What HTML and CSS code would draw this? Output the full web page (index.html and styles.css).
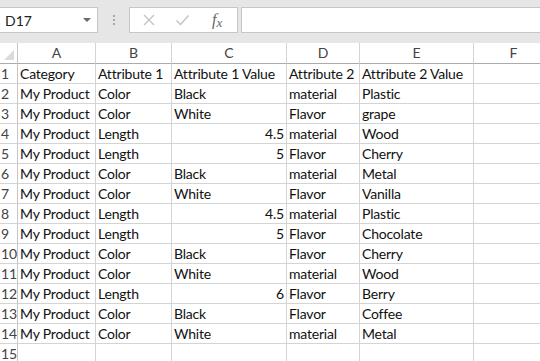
FILE: index.html
```html
<!DOCTYPE html>
<html lang="en">
<head>
    <meta charset="UTF-8">
    <title>Sheet1</title>
    <link rel="stylesheet" href="styles.css">
</head>
<body>
    <div class="formula-bar">
        <div class="name-box">
            <span>D17</span>
            <span class="name-arrow"></span>
        </div>
        <div class="grip">
            <span></span><span></span><span></span>
        </div>
        <div class="fx-buttons">
            <svg class="fx-icon" width="14" height="14" viewBox="0 0 14 14">
                <path d="M2 2 L12 12 M12 2 L2 12" stroke="#c4c4c4" stroke-width="1.4" fill="none"/>
            </svg>
            <svg class="fx-icon" width="15" height="14" viewBox="0 0 15 14">
                <path d="M1.5 7.5 L5.5 11.5 L13.5 2.5" stroke="#c4c4c4" stroke-width="1.5" fill="none"/>
            </svg>
            <span class="fx-label"><i>f</i><span class="fx-x">x</span></span>
        </div>
        <div class="formula-input"></div>
    </div>

    <div class="sheet">
        <div class="corner"><span class="corner-tri"></span></div>
        <div class="col-head">A</div>
        <div class="col-head">B</div>
        <div class="col-head">C</div>
        <div class="col-head">D</div>
        <div class="col-head">E</div>
        <div class="col-head">F</div>

        <div class="row-head">1</div>
        <div class="cell">Category</div>
        <div class="cell">Attribute 1</div>
        <div class="cell">Attribute 1 Value</div>
        <div class="cell">Attribute 2</div>
        <div class="cell">Attribute 2 Value</div>
        <div class="cell"></div>

        <div class="row-head">2</div>
        <div class="cell">My Product</div>
        <div class="cell">Color</div>
        <div class="cell">Black</div>
        <div class="cell">material</div>
        <div class="cell">Plastic</div>
        <div class="cell"></div>

        <div class="row-head">3</div>
        <div class="cell">My Product</div>
        <div class="cell">Color</div>
        <div class="cell">White</div>
        <div class="cell">Flavor</div>
        <div class="cell">grape</div>
        <div class="cell"></div>

        <div class="row-head">4</div>
        <div class="cell">My Product</div>
        <div class="cell">Length</div>
        <div class="cell num">4.5</div>
        <div class="cell">material</div>
        <div class="cell">Wood</div>
        <div class="cell"></div>

        <div class="row-head">5</div>
        <div class="cell">My Product</div>
        <div class="cell">Length</div>
        <div class="cell num">5</div>
        <div class="cell">Flavor</div>
        <div class="cell">Cherry</div>
        <div class="cell"></div>

        <div class="row-head">6</div>
        <div class="cell">My Product</div>
        <div class="cell">Color</div>
        <div class="cell">Black</div>
        <div class="cell">material</div>
        <div class="cell">Metal</div>
        <div class="cell"></div>

        <div class="row-head">7</div>
        <div class="cell">My Product</div>
        <div class="cell">Color</div>
        <div class="cell">White</div>
        <div class="cell">Flavor</div>
        <div class="cell">Vanilla</div>
        <div class="cell"></div>

        <div class="row-head">8</div>
        <div class="cell">My Product</div>
        <div class="cell">Length</div>
        <div class="cell num">4.5</div>
        <div class="cell">material</div>
        <div class="cell">Plastic</div>
        <div class="cell"></div>

        <div class="row-head">9</div>
        <div class="cell">My Product</div>
        <div class="cell">Length</div>
        <div class="cell num">5</div>
        <div class="cell">Flavor</div>
        <div class="cell">Chocolate</div>
        <div class="cell"></div>

        <div class="row-head">10</div>
        <div class="cell">My Product</div>
        <div class="cell">Color</div>
        <div class="cell">Black</div>
        <div class="cell">Flavor</div>
        <div class="cell">Cherry</div>
        <div class="cell"></div>

        <div class="row-head">11</div>
        <div class="cell">My Product</div>
        <div class="cell">Color</div>
        <div class="cell">White</div>
        <div class="cell">material</div>
        <div class="cell">Wood</div>
        <div class="cell"></div>

        <div class="row-head">12</div>
        <div class="cell">My Product</div>
        <div class="cell">Length</div>
        <div class="cell num">6</div>
        <div class="cell">Flavor</div>
        <div class="cell">Berry</div>
        <div class="cell"></div>

        <div class="row-head">13</div>
        <div class="cell">My Product</div>
        <div class="cell">Color</div>
        <div class="cell">Black</div>
        <div class="cell">Flavor</div>
        <div class="cell">Coffee</div>
        <div class="cell"></div>

        <div class="row-head">14</div>
        <div class="cell">My Product</div>
        <div class="cell">Color</div>
        <div class="cell">White</div>
        <div class="cell">material</div>
        <div class="cell">Metal</div>
        <div class="cell"></div>

        <div class="row-head">15</div>
        <div class="cell"></div>
        <div class="cell"></div>
        <div class="cell"></div>
        <div class="cell"></div>
        <div class="cell"></div>
        <div class="cell"></div>
    </div>
</body>
</html>
```

FILE: styles.css
```css
/* Grund */
body {
    margin: 0;
    width: 540px;
    height: 361px;
    overflow: hidden;
    background: #ffffff;
    font-family: Lato, "Liberation Sans", sans-serif;
    color: #000;
}

/* Formelfält */
.formula-bar {
    display: flex;
    align-items: stretch;
    height: 43px;
    padding-top: 7px;
    box-sizing: border-box;
    background: #e6e6e6;
}

.name-box {
    width: 99px;
    height: 26px;
    box-sizing: border-box;
    margin-left: -1px;
    background: #fff;
    border: 1px solid #c6c6c6;
    display: flex;
    align-items: center;
    justify-content: space-between;
    padding: 0 6px 0 5px;
    font-size: 14px;
    color: #222;
}

.name-arrow {
    width: 0;
    height: 0;
    border-left: 4px solid transparent;
    border-right: 4px solid transparent;
    border-top: 4px solid #6a6a6a;
}

.grip {
    width: 31px;
    height: 26px;
    display: flex;
    flex-direction: column;
    align-items: center;
    justify-content: center;
    gap: 2px;
}

.grip span {
    width: 2px;
    height: 2px;
    background: #a8a8a8;
}

.fx-buttons {
    width: 109px;
    height: 26px;
    box-sizing: border-box;
    background: #fff;
    border: 1px solid #c6c6c6;
    display: flex;
    align-items: center;
    padding-left: 12px;
    gap: 19px;
}

.fx-label {
    font-family: "Liberation Serif", serif;
    font-size: 16px;
    font-style: italic;
    color: #666;
    margin-left: 3px;
}

.fx-x {
    font-size: 13px;
    position: relative;
    top: 2px;
}

.formula-input {
    flex: 1;
    height: 26px;
    box-sizing: border-box;
    margin-left: 3px;
    margin-right: -2px;
    background: #fff;
    border: 1px solid #c6c6c6;
}

/* Kalkylblad */
.sheet {
    display: grid;
    grid-template-columns: 18px 78px 76px 115px 73px 114px 80px;
    grid-template-rows: 21px;
    grid-auto-rows: 20px;
}

.sheet > div {
    box-sizing: border-box;
    border-right: 1px solid #d4d4d4;
    border-bottom: 1px solid #d4d4d4;
    white-space: nowrap;
    overflow: hidden;
}

.corner {
    position: relative;
    background: #fff;
    border-right-color: #c6c6c6 !important;
    border-bottom-color: #ababab !important;
}

.corner-tri {
    position: absolute;
    right: 3px;
    bottom: 3px;
    width: 0;
    height: 0;
    border-left: 10px solid transparent;
    border-bottom: 10px solid #dadada;
}

.col-head {
    background: #fff;
    border-bottom-color: #ababab !important;
    text-align: center;
    font-size: 14px;
    line-height: 20px;
    color: #444;
}

.row-head {
    background: #fff;
    border-right-color: #c6c6c6 !important;
    padding-left: 1px;
    font-size: 14px;
    line-height: 20px;
    color: #444;
}

.cell {
    padding: 0 2px;
    font-size: 14px;
    letter-spacing: -0.2px;
    line-height: 20px;
    color: #111;
}

.cell.num {
    text-align: right;
}
```
